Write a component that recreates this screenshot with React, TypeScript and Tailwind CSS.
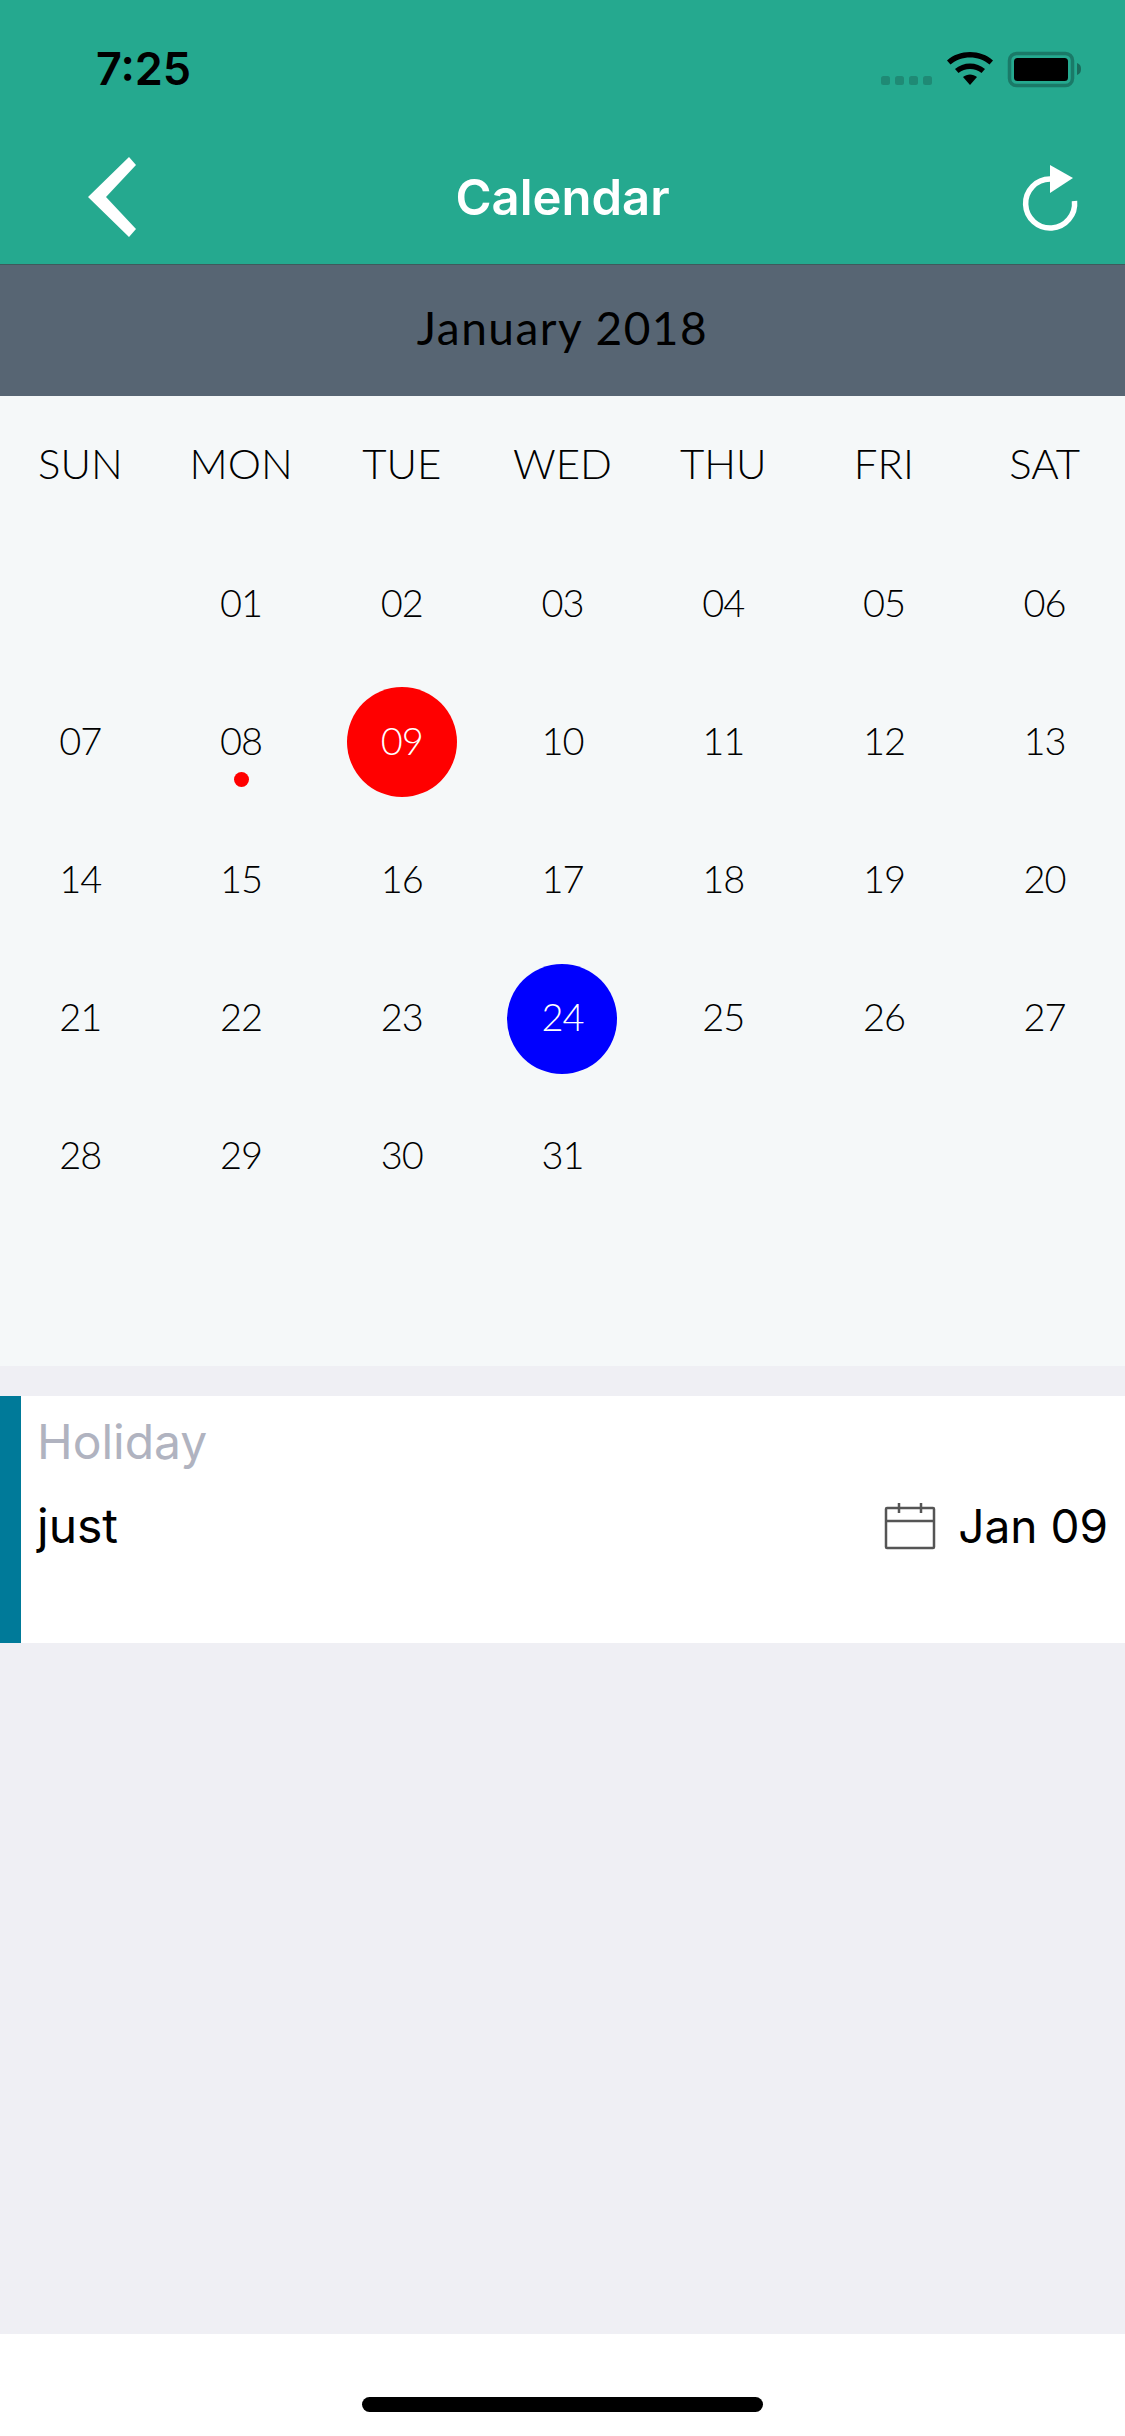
import React from "react";

const days = ["SUN", "MON", "TUE", "WED", "THU", "FRI", "SAT"];
const dates = ["", "01", "02", "03", "04", "05", "06", "07", "08", "09", "10", "11", "12", "13", "14", "15", "16", "17", "18", "19", "20", "21", "22", "23", "24", "25", "26", "27", "28", "29", "30", "31"];

function DateCell({ value }: { value: string }) {
  const selected = value === "09" ? "bg-[#ff0000] text-white" : value === "24" ? "bg-[#0000ff] text-white" : "text-black";
  return (
    <div className="relative flex h-[138.2px] items-center justify-center">
      <div className={`flex h-[110px] w-[110px] items-center justify-center rounded-full pb-[5px] ${selected}`}>{value}</div>
      {value === "08" && <span className="absolute left-[73px] top-[99px] h-[15px] w-[15px] rounded-full bg-[#ff0000]" />}
    </div>
  );
}

export default function App() {
  return (
    <div className="flex h-[2436px] w-[1125px] flex-col bg-[#efeff4] font-['Inter',sans-serif]">
      <header className="h-[265px] shrink-0 border-b border-b-[#3e5a5c] bg-[#25a98f]">
        <div className="relative flex h-[132px] items-start justify-between pl-[96px] pt-[41px]">
          <span className="text-[45px] font-semibold leading-[56px] text-black">7:25</span>
          <div className="absolute left-[880px] top-[50px]">
            <svg width="204" height="38" viewBox="0 0 204 38" fill="none">
              <g fill="#1f8a75">
                <rect x="1" y="26" width="9" height="9" rx="2.5" />
                <rect x="15" y="26" width="9" height="9" rx="2.5" />
                <rect x="29" y="26" width="9" height="9" rx="2.5" />
                <rect x="43" y="26" width="9" height="9" rx="2.5" />
              </g>
              <path d="M67 10.5 C79 -1 101 -1 113 10.5 L109.5 14.5 C99 5 81 5 70.5 14.5 Z" fill="#000" />
              <path d="M75 19 C83 11.5 97 11.5 105 19 L101.5 23 C95 17.5 85 17.5 78.5 23 Z" fill="#000" />
              <path d="M83 27 C87 23.5 93 23.5 97 27 L90 35 Z" fill="#000" />
              <rect x="129.5" y="3.5" width="63" height="32" rx="7" stroke="#1a7a68" strokeWidth="3.5" />
              <rect x="134" y="8" width="54" height="23" rx="3.5" fill="#000" />
              <path d="M197 13 C200 14 201 16 201 19 C201 22 200 24 197 25 Z" fill="#1a6c5c" />
            </svg>
          </div>
        </div>
        <div className="relative flex h-[132px] items-start justify-center">
          <svg className="absolute left-[80px] top-[18px]" width="64" height="96" viewBox="0 0 64 96">
            <polygon points="49,7 56,15 26,47 56,79 49,87 8,47" fill="#fff" />
          </svg>
          <span className="mt-[36px] text-[49px] font-semibold leading-[60px] text-white">Calendar</span>
          <svg className="absolute left-[1015px] top-[28px]" width="70" height="80" viewBox="0 0 70 80">
            <path d="M35 19 A24.5 24.5 0 1 0 59.5 41" stroke="#fff" strokeWidth="5.5" fill="none" />
            <polygon points="35,5 58,18 35,33" fill="#fff" />
          </svg>
        </div>
      </header>

      <div className="flex h-[131px] shrink-0 items-center justify-center bg-[#576573] pb-[6px] font-['Lato',sans-serif] text-[46px] leading-none tracking-[1.5px] text-black">
        January 2018
      </div>

      <section className="h-[970px] shrink-0 bg-[#f5f8f9] font-['Lato',sans-serif] font-light text-black">
        <div className="grid h-[139px] grid-cols-7 items-center pb-[5px] text-[42px] leading-none">
          {days.map((day) => (
            <div key={day} className="text-center">{day}</div>
          ))}
        </div>
        <div className="grid grid-cols-7 text-[38px] leading-none tracking-[-1px]">
          {dates.map((value, index) => (
            <DateCell key={index} value={value} />
          ))}
        </div>
      </section>

      <article className="mt-[30px] flex h-[247px] shrink-0 bg-white">
        <div className="w-[21px] shrink-0 bg-[#007a99]" />
        <div className="flex-1 pl-[16px] pr-[17px] pt-[17px]">
          <div className="text-[48px] leading-[58px] text-[#b0b3c0]">Holiday</div>
          <div className="mt-[26px] flex items-center justify-between text-[48px] leading-[58px] text-black">
            <span>just</span>
            <span className="flex items-center gap-[22px]">
              <svg width="52" height="48" viewBox="0 0 52 48" fill="none" stroke="#555" strokeWidth="2.5">
                <rect x="2" y="6" width="48" height="40" rx="1" />
                <path d="M2 19 H50" />
                <path d="M15 1 V11 M37 1 V11" />
              </svg>
              <span className="text-[46px]">Jan 09</span>
            </span>
          </div>
        </div>
      </article>

      <div className="flex-1" />

      <div className="flex h-[102px] shrink-0 items-start justify-center bg-white pt-[63px]">
        <div className="h-[15px] w-[401px] rounded-full bg-black" />
      </div>
    </div>
  );
}
